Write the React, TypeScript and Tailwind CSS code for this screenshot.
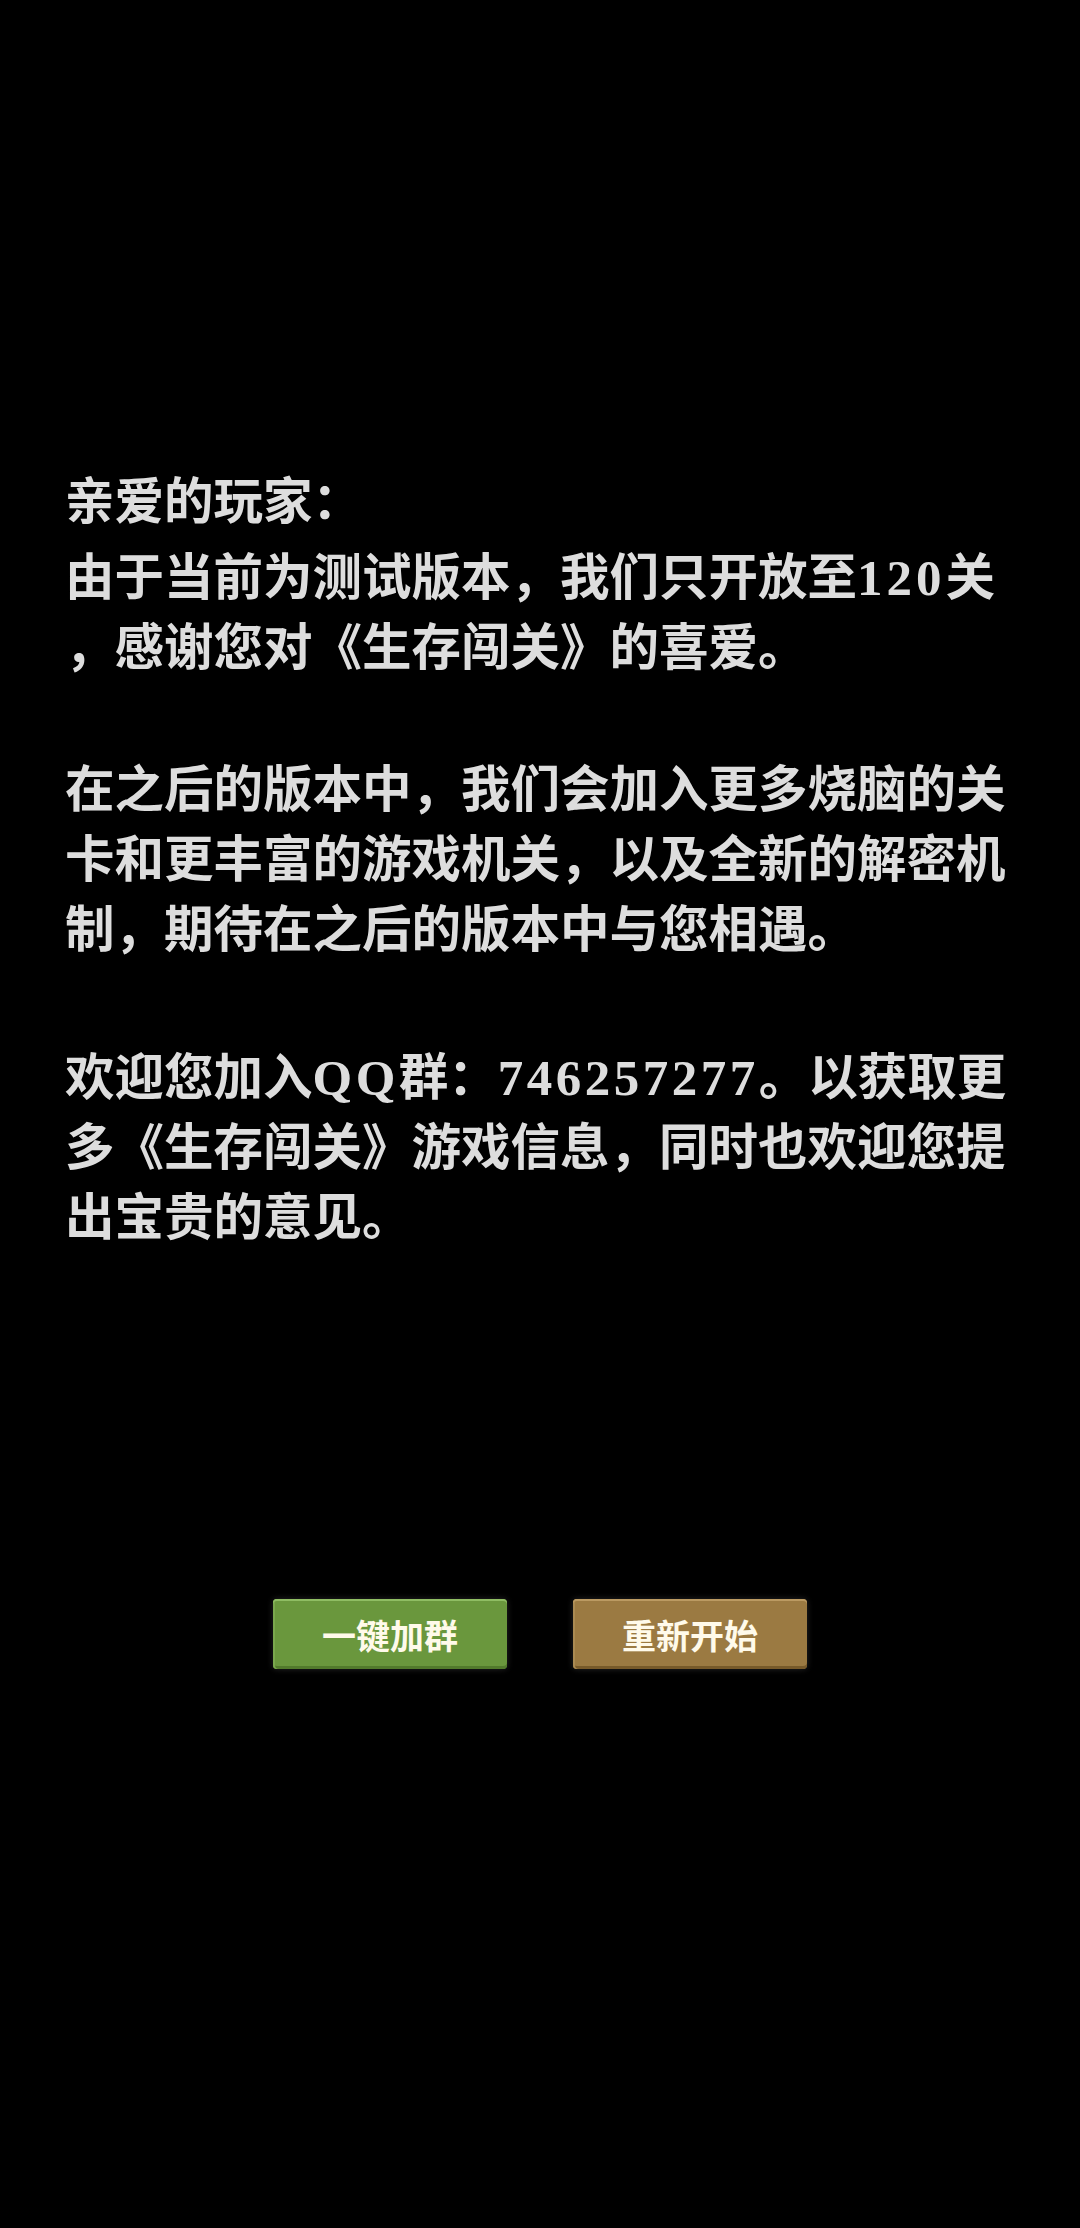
import React from "react";

const L = ({ children, t = "tracking-[4px]" }: { children: React.ReactNode; t?: string }) => (
  <span className={"font-['Liberation_Serif',serif] text-[51px] leading-[0] " + t}>{children}</span>
);

const Line = ({ children, className = "" }: { children: React.ReactNode; className?: string }) => (
  <div className={"h-[70px] whitespace-nowrap " + className}>{children}</div>
);

export default function App() {
  return (
    <div className="min-h-[2228px] w-[1080px] bg-black font-['Noto_Sans_CJK_SC',sans-serif]">
      <div className="pl-[65px] pt-[463px] text-[49.5px] font-bold leading-[70px] text-[#dddddd]">
        <div>
          <Line className="mb-[6px]">亲爱的玩家：</Line>
          <Line>
            由于当前为测试版本，我们只开放至<L>120</L>关
          </Line>
          <Line>，感谢您对《生存闯关》的喜爱。</Line>
        </div>
        <div className="mt-[72px]">
          <Line>在之后的版本中，我们会加入更多烧脑的关</Line>
          <Line>卡和更丰富的游戏机关，以及全新的解密机</Line>
          <Line>制，期待在之后的版本中与您相遇。</Line>
        </div>
        <div className="mt-[78px]">
          <Line>
            欢迎您加入<L t="tracking-[3.5px]">QQ</L>群：<L t="tracking-[3.5px]">746257277</L>。以获取更
          </Line>
          <Line>多《生存闯关》游戏信息，同时也欢迎您提</Line>
          <Line>出宝贵的意见。</Line>
        </div>
      </div>
      <div className="mt-[350px] flex justify-center gap-[66px]">
        <button className="flex h-[70px] w-[234px] items-center justify-center rounded-[4px] bg-[#6a973d] text-[34px] font-bold text-[#fffaea] shadow-[inset_0_2px_0_#8fbd63,inset_2px_0_0_#7aa84d,inset_0_-3px_0_#527a2c,0_0_6px_rgba(80,80,80,0.5)]">
          一键加群
        </button>
        <button className="flex h-[70px] w-[234px] items-center justify-center rounded-[4px] bg-[#9b7a42] text-[34px] font-bold text-[#fffaea] shadow-[inset_0_2px_0_#bb9a62,inset_2px_0_0_#aa8a52,inset_0_-3px_0_#775a2a,0_0_6px_rgba(80,80,80,0.5)]">
          重新开始
        </button>
      </div>
    </div>
  );
}
